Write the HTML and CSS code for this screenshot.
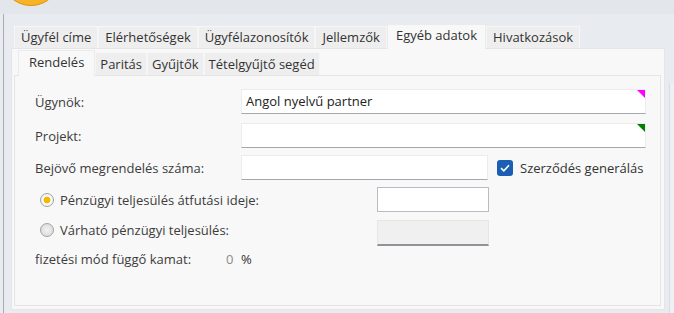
FILE: index.html
```html
<!DOCTYPE html>
<html lang="hu">
<head>
    <meta charset="UTF-8">
    <meta name="viewport" content="width=device-width, initial-scale=1.0">
    <title>Ügyfél adatok | Egyéb adatok</title>
    <link rel="stylesheet" href="styles.css">
</head>
<body>
    <div class="topbar">
        <div class="logo"></div>
    </div>

    <div class="frame">
        <div class="workspace">
            <div class="tabs outer-tabs">
                <div class="tab">Ügyfél címe</div>
                <div class="tab">Elérhetőségek</div>
                <div class="tab">Ügyfélazonosítók</div>
                <div class="tab">Jellemzők</div>
                <div class="tab active">Egyéb adatok</div>
                <div class="tab">Hivatkozások</div>
            </div>
            <div class="page outer-page">
                <div class="tabs inner-tabs">
                    <div class="tab active">Rendelés</div>
                    <div class="tab">Paritás</div>
                    <div class="tab">Gyűjtők</div>
                    <div class="tab">Tételgyűjtő segéd</div>
                </div>
                <div class="page inner-page">
                    <div class="row row-agent">
                        <span class="label">Ügynök:</span>
                        <div class="field wide">
                            Angol nyelvű partner
                            <span class="corner magenta"></span>
                        </div>
                    </div>
                    <div class="row row-project">
                        <span class="label">Projekt:</span>
                        <div class="field wide">
                            <span class="corner green"></span>
                        </div>
                    </div>
                    <div class="row row-order">
                        <span class="label">Bejövő megrendelés száma:</span>
                        <div class="field medium"></div>
                        <span class="checkbox checked">
                            <svg width="10" height="8" viewBox="0 0 10 8"><path d="M1 4.2 L3.8 6.8 L9 1.2" fill="none" stroke="#fff" stroke-width="1.6"/></svg>
                        </span>
                        <span class="check-label">Szerződés generálás</span>
                    </div>
                    <div class="row row-radio first">
                        <span class="radio selected"></span>
                        <span class="radio-label">Pénzügyi teljesülés átfutási ideje:</span>
                        <div class="field small boxed"></div>
                    </div>
                    <div class="row row-radio second">
                        <span class="radio"></span>
                        <span class="radio-label">Várható pénzügyi teljesülés:</span>
                        <div class="field small disabled"></div>
                    </div>
                    <div class="row row-rate">
                        <span class="rate-label">fizetési mód függő kamat:</span>
                        <span class="rate-value">0</span>
                        <span class="rate-unit">%</span>
                    </div>
                </div>
            </div>
        </div>
        <div class="side"></div>
    </div>
</body>
</html>
```

FILE: styles.css
```css
/* Basic layout */
body {
    margin: 0;
    padding: 0;
    width: 674px;
    height: 313px;
    overflow: hidden;
    background-color: #e8ebef;
    font-family: "Open Sans", "Noto Sans", sans-serif;
    font-size: 13px;
    color: #3c3c3c;
}

.topbar {
    height: 14px;
    background-color: #e3e6eb;
    overflow: hidden;
}

.logo {
    width: 58px;
    height: 58px;
    margin: -54px 0 0 1px;
    border-radius: 50%;
    background-color: #f7b425;
    border: 1px solid #e58f0c;
}

.frame {
    display: flex;
    height: 299px;
}

.workspace {
    flex: 1;
    margin-left: 3px;
    border-left: 1px solid #a9acb1;
    padding: 10px 4px 0 7px;
    display: flex;
    flex-direction: column;
}

.side {
    width: 4px;
    margin: 69px 0 0 0;
    background-color: #eef0f3;
    border-left: 1px solid #d9dce1;
}

/* Tabs */
.tabs {
    display: flex;
    align-items: flex-end;
    position: relative;
    z-index: 1;
}

.tab {
    background-color: #eeeeee;
    border: 1px solid #f6f6f6;
    border-bottom: none;
    white-space: nowrap;
    color: #333;
}

.tab.active {
    background-color: #f8f8f8;
    border-color: #ebebeb;
    margin-bottom: -1px;
}

.outer-tabs {
    padding-left: 3px;
}

.outer-tabs .tab {
    height: 21px;
    line-height: 21px;
    padding: 0 6px;
}

.outer-tabs .tab.active {
    height: 24px;
    line-height: 21px;
    padding: 0 8px;
}

.inner-tabs {
    padding: 1px 0 0 4px;
}

.inner-tabs .tab {
    height: 22px;
    line-height: 22px;
    padding: 0 4px;
}

.inner-tabs .tab.active {
    height: 25px;
    line-height: 22px;
    padding: 0 10px;
}

.page {
    background-color: #f8f8f8;
    border: 1px solid #e5e5e5;
}

.outer-page {
    height: 257px;
    padding: 0 3px 3px 2px;
    display: flex;
    flex-direction: column;
}

.inner-page {
    flex: 1;
    padding: 13px 14px 0 20px;
}

/* Form rows */
.row {
    display: flex;
    align-items: center;
}

.label {
    width: 206px;
}

.field {
    position: relative;
    box-sizing: border-box;
    height: 25px;
    line-height: 23px;
    padding: 0 4px;
    background-color: #fff;
    border: 1px solid #ececec;
    border-bottom-color: #a5a8ad;
    color: #222;
}

.field.wide {
    flex: 1;
}

.field.medium {
    width: 247px;
}

.field.small {
    width: 112px;
}

.field.boxed {
    border: 1px solid #b7bcc5;
}

.field.disabled {
    height: 26px;
    background-color: #f0f0f0;
    border-color: #e6e6e6;
    border-bottom: 2px solid #8f9296;
}

.corner {
    position: absolute;
    top: 0;
    right: 0;
    width: 0;
    height: 0;
    border-top: 8px solid;
    border-left: 8px solid transparent;
}

.corner.magenta {
    border-top-color: #ff00ff;
}

.corner.green {
    border-top-color: #008000;
}

.row-project {
    margin-top: 9px;
}

.row-order {
    margin-top: 7px;
}

.checkbox {
    display: inline-flex;
    align-items: center;
    justify-content: center;
    width: 16px;
    height: 16px;
    margin: 0 7px 0 9px;
    border-radius: 3px;
    background-color: #1b5fb4;
}

.check-label {
    white-space: nowrap;
    color: #333;
}

.row-radio.first {
    margin-top: 7px;
}

.row-radio.second {
    margin-top: 8px;
}

.radio {
    box-sizing: border-box;
    width: 14px;
    height: 14px;
    margin: 0 6px 0 5px;
    border-radius: 50%;
    border: 1px solid #a2a2a2;
    background: radial-gradient(circle, #f2f2f2 0, #d6d6d6 100%);
}

.radio.selected {
    background: radial-gradient(circle, #f5b800 0, #f5b800 3px, #ffffff 3.8px, #dddddd 100%);
}

.row-radio.second .radio {
    margin-top: -6px;
}

.radio-label {
    width: 317px;
    white-space: nowrap;
}

.row-radio.second .radio-label {
    margin-top: -6px;
}

.row-rate {
    margin-top: 4px;
    height: 18px;
}

.rate-label {
    width: 191px;
}

.rate-value {
    color: #8a8a8a;
    width: 15px;
}

.rate-unit {
    color: #333;
}
```
